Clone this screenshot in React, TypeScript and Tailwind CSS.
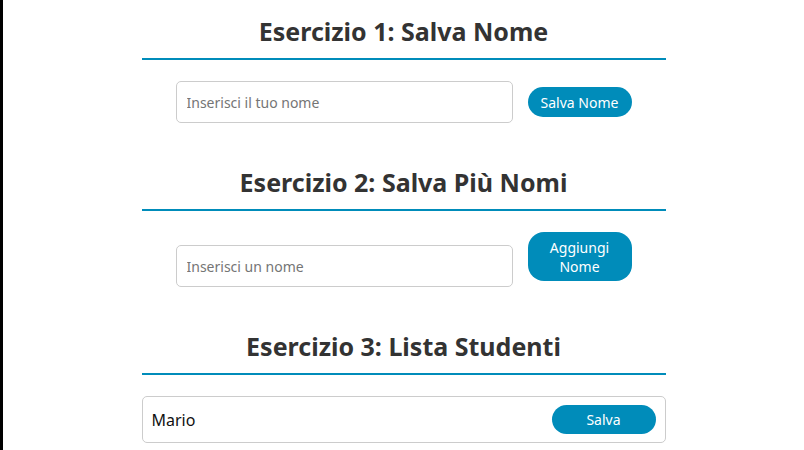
import React, { useState } from 'react';

const font = { fontFamily: '"Noto Sans", "Open Sans", sans-serif' };

const Heading: React.FC<{ children: React.ReactNode }> = ({ children }) => (
  <h2 className="text-center text-[25px] leading-[34px] font-bold text-[#333] pb-[10px] border-b-2 border-[#008cba]">
    {children}
  </h2>
);

const Btn: React.FC<{ children: React.ReactNode; onClick?: () => void }> = ({ children, onClick }) => (
  <button
    onClick={onClick}
    className="w-[104px] shrink-0 rounded-2xl bg-[#008cba] text-white text-[14px] leading-[19px] py-[5.5px] px-[12px] text-center"
  >
    {children}
  </button>
);

export default function App() {
  const [nome, setNome] = useState('');
  const [altro, setAltro] = useState('');
  const [studenti] = useState(['Mario']);

  return (
    <div className="flex min-h-screen bg-white" style={font}>
      <div className="w-[3px] shrink-0 bg-black" />
      <div className="flex-1 flex justify-center">
        <div className="w-[524px] pt-[14px]">
          {/* Esercizio 1 */}
          <section>
            <Heading>Esercizio 1: Salva Nome</Heading>
            <div className="mt-[21px] flex justify-center [align-items:last_baseline] gap-[15px]">
              <input
                value={nome}
                onChange={(e) => setNome(e.target.value)}
                placeholder="Inserisci il tuo nome"
                className="w-[337px] h-[42px] px-[10px] text-[14px] border border-[#ccc] rounded-[5px] outline-none placeholder:text-[#757575]"
              />
              <Btn>Salva Nome</Btn>
            </div>
          </section>

          {/* Esercizio 2 */}
          <section className="mt-[42px]">
            <Heading>Esercizio 2: Salva Più Nomi</Heading>
            <div className="mt-[21px] flex justify-center [align-items:last_baseline] gap-[15px]">
              <input
                value={altro}
                onChange={(e) => setAltro(e.target.value)}
                placeholder="Inserisci un nome"
                className="w-[337px] h-[42px] px-[10px] text-[14px] border border-[#ccc] rounded-[5px] outline-none placeholder:text-[#757575]"
              />
              <Btn>Aggiungi Nome</Btn>
            </div>
          </section>

          {/* Esercizio 3 */}
          <section className="mt-[42px]">
            <Heading>Esercizio 3: Lista Studenti</Heading>
            <ul className="mt-[21px]">
              {studenti.map((s) => (
                <li
                  key={s}
                  className="h-[47px] flex items-center justify-between px-[9px] border border-[#ccc] rounded-[5px]"
                >
                  <span className="text-[16px] text-[#111]">{s}</span>
                  <button className="w-[104px] rounded-2xl bg-[#008cba] text-white text-[14px] leading-[19px] py-[5px]">
                    Salva
                  </button>
                </li>
              ))}
            </ul>
          </section>
        </div>
      </div>
    </div>
  );
}
